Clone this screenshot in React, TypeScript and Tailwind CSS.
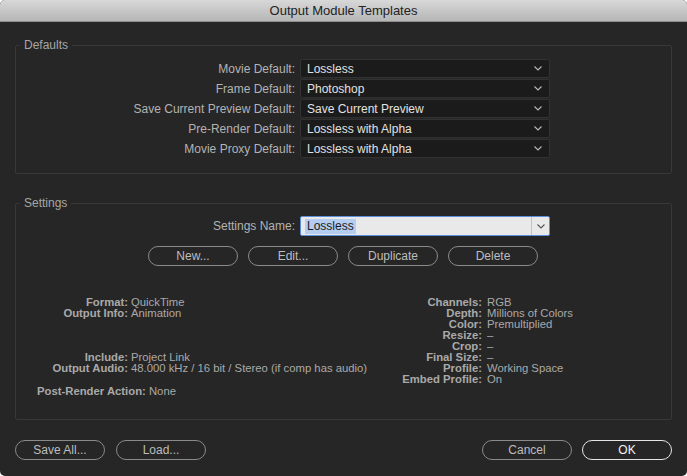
import React from 'react'

const font = "font-['Liberation_Sans',Arial,sans-serif]"

const defaults = [
  { label: 'Movie Default:', value: 'Lossless' },
  { label: 'Frame Default:', value: 'Photoshop' },
  { label: 'Save Current Preview Default:', value: 'Save Current Preview' },
  { label: 'Pre-Render Default:', value: 'Lossless with Alpha' },
  { label: 'Movie Proxy Default:', value: 'Lossless with Alpha' },
]

const leftInfo: [string, string][] = [
  ['Format:', 'QuickTime'],
  ['Output Info:', 'Animation'],
  ['', ''],
  ['', ''],
  ['', ''],
  ['Include:', 'Project Link'],
  ['Output Audio:', '48.000 kHz / 16 bit / Stereo (if comp has audio)'],
  ['', ''],
]

const rightInfo: [string, string][] = [
  ['Channels:', 'RGB'],
  ['Depth:', 'Millions of Colors'],
  ['Color:', 'Premultiplied'],
  ['Resize:', '–'],
  ['Crop:', '–'],
  ['Final Size:', '–'],
  ['Profile:', 'Working Space'],
  ['Embed Profile:', 'On'],
]

function Chevron({ color }: { color: string }) {
  return (
    <svg width="8" height="5" viewBox="0 0 8 5" className="shrink-0">
      <polyline points="0.5,0.5 4,4 7.5,0.5" fill="none" stroke={color} strokeWidth="1.1" />
    </svg>
  )
}

function Select({ value }: { value: string }) {
  return (
    <div className="w-[250px] h-[19px] flex items-center justify-between pl-[6px] pr-[7px] bg-[#1b1b1b] border border-[#323232] rounded-[2px] text-[12px] text-[#e2e2e2]">
      <span>{value}</span>
      <Chevron color="#b8b8b8" />
    </div>
  )
}

function PillButton({ children, primary }: { children: React.ReactNode; primary?: boolean }) {
  return (
    <button
      className={
        primary
          ? 'w-[90px] h-[20px] rounded-full border-[1.5px] border-[#e6e6e6] text-[12px] text-[#f2f2f2] flex items-center justify-center'
          : 'w-[90px] h-[20px] rounded-full border-[1.5px] border-[#8a8a8a] text-[12px] text-[#bdbdbd] flex items-center justify-center'
      }
    >
      {children}
    </button>
  )
}

function InfoGrid({ rows, labelWidth, gap }: { rows: [string, string][]; labelWidth: string; gap: string }) {
  return (
    <div className={`grid ${labelWidth} ${gap} text-[11.3px] leading-[11px] text-[#a9a9a9]`}>
      {rows.map(([k, v], i) => (
        <React.Fragment key={i}>
          <span className="text-right font-bold h-[11px] whitespace-nowrap">{k}</span>
          <span className="h-[11px] whitespace-nowrap">{v}</span>
        </React.Fragment>
      ))}
    </div>
  )
}

export default function App() {
  return (
    <div className={`w-[687px] h-[476px] bg-white ${font}`}>
      <div className="w-full h-full rounded-[5px] overflow-hidden bg-[#262626] flex flex-col">
        {/* title bar */}
        <div className="h-[22px] shrink-0 flex items-center justify-center bg-gradient-to-b from-[#d8d8d8] to-[#b6b6b6] border-b border-[#8e8e8e] text-[13px] text-[#222]">
          Output Module Templates
        </div>

        <div className="flex flex-col pt-[23px]">
          {/* Defaults */}
          <div className="mx-[15px] border border-[#383838] rounded-[2px] pb-[15px]">
            <div className="-mt-[8px] ml-[4px] px-[4px] w-fit bg-[#262626] text-[12px] leading-[15px] text-[#a6a6a6]">
              Defaults
            </div>
            <div className="mt-[6px] flex flex-col gap-[1px]">
              {defaults.map((d) => (
                <div key={d.label} className="flex items-center gap-[5px]">
                  <span className="w-[279px] text-right text-[12px] text-[#b3b3b3]">{d.label}</span>
                  <Select value={d.value} />
                </div>
              ))}
            </div>
          </div>

          {/* Settings */}
          <div className="mx-[15px] mt-[29px] border border-[#383838] rounded-[2px] pb-[22px]">
            <div className="-mt-[8px] ml-[4px] px-[4px] w-fit bg-[#262626] text-[12px] leading-[15px] text-[#a6a6a6]">
              Settings
            </div>
            <div className="mt-[5px] flex items-center gap-[5px]">
              <span className="w-[279px] text-right text-[12px] text-[#b3b3b3]">Settings Name:</span>
              <div className="w-[250px] h-[20px] flex items-stretch bg-[#e9e9e9] border border-[#5b8fdb] rounded-[2px]">
                <div className="flex-1 flex items-center pl-[4px]">
                  <span className="bg-[#b5cdf0] text-[12px] leading-[15px] text-[#1c1c1c] px-[2px]">Lossless</span>
                </div>
                <div className="w-[18px] flex items-center justify-center border-l border-[#c4c4c4]">
                  <Chevron color="#555" />
                </div>
              </div>
            </div>
            <div className="mt-[10px] pl-[132px] flex gap-[10px]">
              <PillButton>New...</PillButton>
              <PillButton>Edit...</PillButton>
              <PillButton>Duplicate</PillButton>
              <PillButton>Delete</PillButton>
            </div>

            <div className="mt-[31px] flex">
              <div className="w-[360px]">
                <InfoGrid rows={leftInfo} labelWidth="grid-cols-[112px_auto]" gap="gap-x-[3px]" />
              </div>
              <InfoGrid rows={rightInfo} labelWidth="grid-cols-[106px_auto]" gap="gap-x-[5px]" />
            </div>
            <div className="mt-[1px] pl-[21px] text-[11.3px] leading-[11px] text-[#a9a9a9]">
              <span className="font-bold">Post-Render Action:</span> None
            </div>
          </div>

          {/* footer */}
          <div className="mt-[20px] px-[15px] flex items-center">
            <div className="flex gap-[11px]">
              <PillButton>Save All...</PillButton>
              <PillButton>Load...</PillButton>
            </div>
            <div className="ml-auto flex gap-[10px]">
              <PillButton>Cancel</PillButton>
              <PillButton primary>OK</PillButton>
            </div>
          </div>
        </div>
      </div>
    </div>
  )
}
